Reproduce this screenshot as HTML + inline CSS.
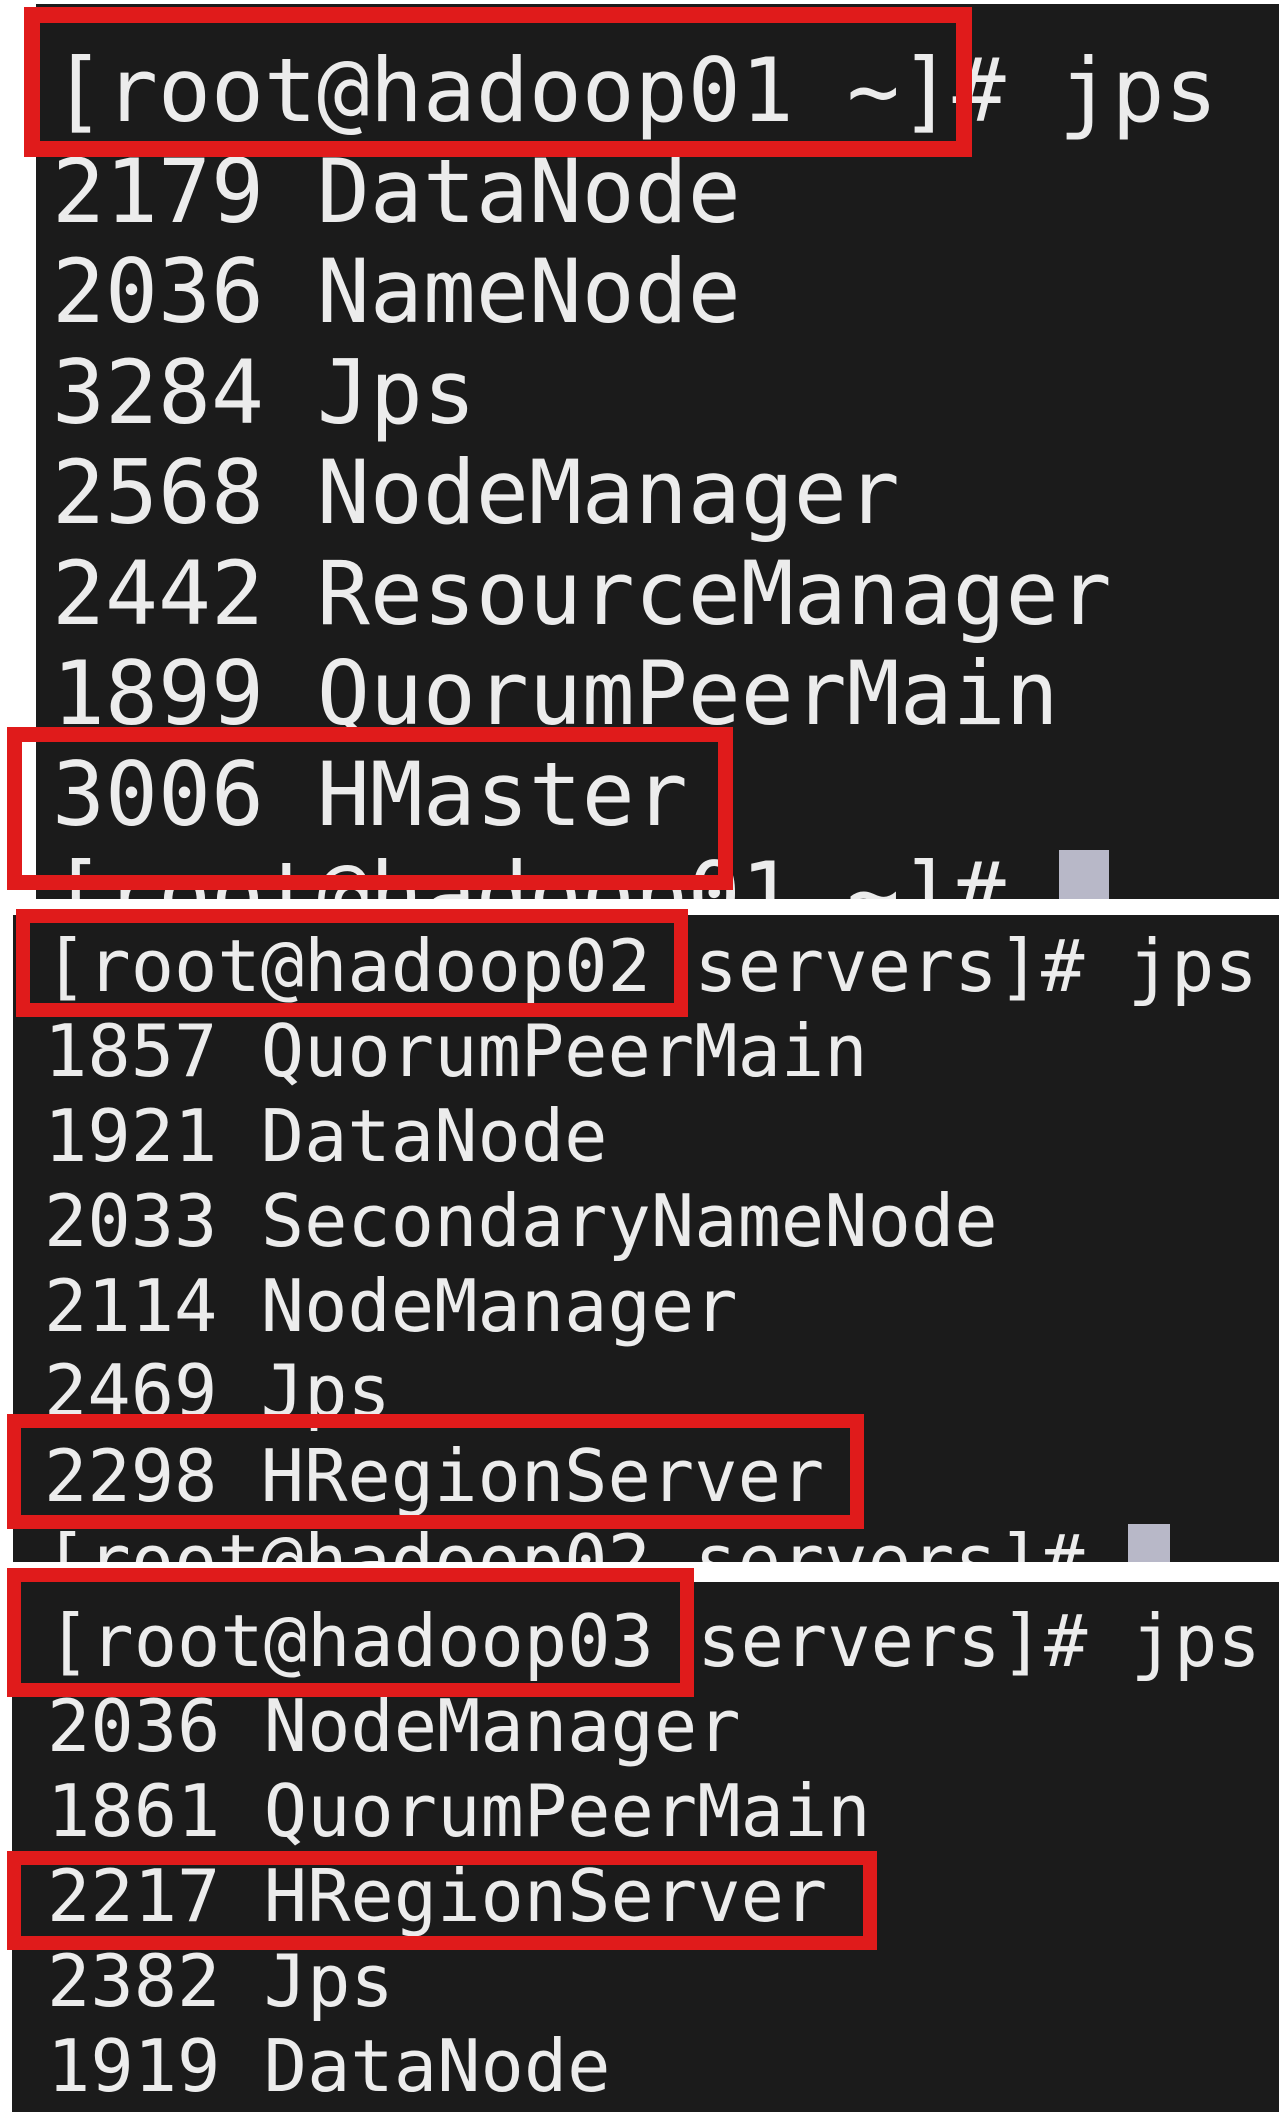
<!DOCTYPE html>
<html><head><meta charset="utf-8"><style>
html,body{margin:0;padding:0;background:#fff;width:1279px;height:2112px;overflow:hidden;position:relative}
.p{position:absolute;background:#1b1b1b;overflow:hidden}
.t{position:absolute;font-family:"DejaVu Sans Mono","Liberation Mono",monospace;color:#ececec;white-space:pre;margin:0}
.b{position:absolute;border:14px solid #e01b1b;box-sizing:border-box}
.cur{display:inline-block;background:#b8b8c8;vertical-align:top}
</style></head><body>
<div class="p" style="left:36px;top:4px;width:1243px;height:895px">
<pre class="t" style="left:16px;top:37px;font-size:88px;line-height:100.5px">[root@hadoop01 ~]# jps
2179 DataNode
2036 NameNode
3284 Jps
2568 NodeManager
2442 ResourceManager
1899 QuorumPeerMain
3006 HMaster
[root@hadoop01 ~]# <span class="cur" style="width:50px;height:90px;margin-top:5px"></span></pre>
</div>
<div class="p" style="left:13px;top:915px;width:1266px;height:647px">
<pre class="t" style="left:31px;top:9px;font-size:72px;line-height:85px">[root@hadoop02 servers]# jps
1857 QuorumPeerMain
1921 DataNode
2033 SecondaryNameNode
2114 NodeManager
2469 Jps
2298 HRegionServer
[root@hadoop02 servers]# <span class="cur" style="width:42px;height:75px;margin-top:5px"></span></pre>
</div>
<div class="p" style="left:12px;top:1582px;width:1267px;height:530px">
<pre class="t" style="left:35px;top:17px;font-size:72px;line-height:85px">[root@hadoop03 servers]# jps
2036 NodeManager
1861 QuorumPeerMain
2217 HRegionServer
2382 Jps
1919 DataNode</pre>
</div>
<div class="b" style="left:24px;top:7px;width:948px;height:150px;border-width:16px"></div>
<div class="b" style="left:7px;top:727px;width:726px;height:163px;border-width:15px"></div>
<div class="b" style="left:16px;top:909px;width:672px;height:108px"></div>
<div class="b" style="left:7px;top:1414px;width:857px;height:115px"></div>
<div class="b" style="left:7px;top:1568px;width:687px;height:129px"></div>
<div class="b" style="left:7px;top:1851px;width:870px;height:99px"></div>
</body></html>
